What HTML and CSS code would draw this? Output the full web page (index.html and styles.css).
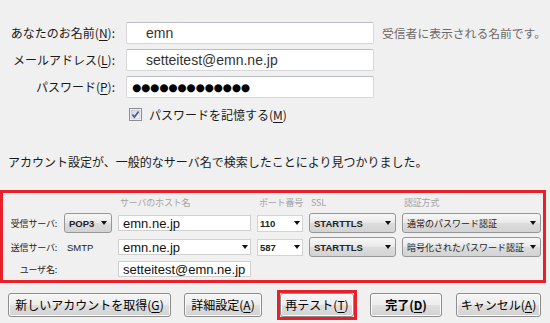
FILE: index.html
```html
<!DOCTYPE html>
<html>

<head>
  <meta charset="utf-8">
  <title>アカウント設定</title>
  <link rel="stylesheet" href="styles.css">
</head>

<body>
  <div class="identity">
    <label class="field-label">あなたのお名前(<u>N</u>):</label>
    <div class="text-box">emn</div>
    <span class="hint">受信者に表示される名前です。</span>

    <label class="field-label">メールアドレス(<u>L</u>):</label>
    <div class="text-box">setteitest@emn.ne.jp</div>
    <span></span>

    <label class="field-label">パスワード(<u>P</u>):</label>
    <div class="text-box password">●●●●●●●●●●●●●</div>
    <span></span>
  </div>

  <div class="remember">
    <svg class="check" width="13" height="13" viewBox="0 0 13 13">
      <defs>
        <linearGradient id="chk" x1="0" y1="0" x2="1" y2="1">
          <stop offset="0" stop-color="#cfd5e0" />
          <stop offset="1" stop-color="#f7f8fa" />
        </linearGradient>
      </defs>
      <rect x="0.5" y="0.5" width="12" height="12" fill="#fff" stroke="#8e8f8f" />
      <rect x="2" y="2" width="9" height="9" fill="url(#chk)" stroke="#b3bac8" stroke-width="0.6" />
      <path d="M3.4 6.4 L5.4 9 L9.6 3.4" fill="none" stroke="#4a5a8c" stroke-width="1.7" />
    </svg>
    <span>パスワードを記憶する(<u>M</u>)</span>
  </div>

  <p class="status">アカウント設定が、一般的なサーバ名で検索したことにより見つかりました。</p>

  <div class="server-box">
    <span></span>
    <span></span>
    <span class="col-head">サーバのホスト名</span>
    <span class="col-head">ポート番号</span>
    <span class="col-head">SSL</span>
    <span class="col-head">認証方式</span>

    <span class="row-label">受信サーバ:</span>
    <div class="select latin">POP3</div>
    <div class="host">emn.ne.jp</div>
    <div class="combo latin">110</div>
    <div class="select latin">STARTTLS</div>
    <div class="select">通常のパスワード認証</div>

    <span class="row-label">送信サーバ:</span>
    <span class="plain latin">SMTP</span>
    <div class="host combo-host">emn.ne.jp</div>
    <div class="combo latin">587</div>
    <div class="select latin">STARTTLS</div>
    <div class="select">暗号化されたパスワード認証</div>

    <span class="row-label">ユーザ名:</span>
    <span></span>
    <div class="host">setteitest@emn.ne.jp</div>
  </div>

  <div class="actions">
    <button type="button" class="btn new-account">新しいアカウントを取得(<u>G</u>)</button>
    <button type="button" class="btn advanced">詳細設定(<u>A</u>)</button>
    <div class="highlight">
      <button type="button" class="btn retest">再テスト(<u>T</u>)</button>
    </div>
    <button type="button" class="btn done">完了(<u>D</u>)</button>
    <button type="button" class="btn cancel">キャンセル(<u>A</u>)</button>
  </div>
</body>

</html>
```

FILE: styles.css
```css
body {
  margin: 0;
  background-color: #f0f0f0;
  font-family: "Noto Sans CJK JP", "Liberation Sans", sans-serif;
  font-size: 12px;
  color: #1a1a1a;
}

u {
  text-decoration: underline;
  text-underline-offset: 2px;
}

/* top fields */
.identity {
  display: grid;
  grid-template-columns: 117px 249px 1fr;
  grid-auto-rows: 22px;
  column-gap: 8px;
  row-gap: 5px;
  align-items: center;
  padding-top: 22px;
}

.identity > :nth-child(3n+2) {
  margin-left: 1px;
}

.field-label {
  text-align: right;
  padding-right: 2px;
  line-height: 22px;
  white-space: nowrap;
}

.text-box {
  box-sizing: border-box;
  height: 22px;
  background-color: #fff;
  border: 1px solid #d5d7db;
  border-top-color: #b9bcc2;
  border-radius: 2px;
  padding-left: 19px;
  font-family: "Liberation Sans", sans-serif;
  font-size: 14px;
  line-height: 20px;
  color: #333;
}

.password {
  padding-left: 5px;
  font-family: "DejaVu Sans", sans-serif;
  font-size: 10.5px;
  letter-spacing: -0.1px;
  color: #000;
  white-space: nowrap;
}

.hint {
  color: #6b6b6b;
  font-size: 11.8px;
  line-height: 22px;
  white-space: nowrap;
}

.remember {
  display: flex;
  align-items: center;
  gap: 7px;
  height: 13px;
  margin-top: 10px;
  padding-left: 129px;
  line-height: 13px;
}

.status {
  margin: 33px 0 0 8px;
  line-height: 16px;
}

/* server table */
.server-box {
  box-sizing: border-box;
  width: 546px;
  height: 93px;
  margin-top: 20px;
  border: 3px solid #e8202a;
  padding: 4px 0 0 7px;
  display: grid;
  grid-template-columns: 48px 48px 133px 46px 87px 139px;
  grid-template-rows: 12px 20px 20px 16px;
  column-gap: 6px;
  row-gap: 4px;
  align-items: center;
  font-size: 9px;
  white-space: nowrap;
}

.col-head {
  padding-left: 2px;
  color: #a3a3a3;
  line-height: 12px;
  letter-spacing: -0.2px;
}

.row-label {
  text-align: right;
  padding-right: 1px;
  font-size: 9px;
  letter-spacing: -0.2px;
  color: #1e1e1e;
}

.latin {
  font-family: "Liberation Sans", sans-serif;
  font-weight: bold;
  font-size: 9.5px;
  color: #222;
}

.plain {
  padding-left: 3px;
  font-weight: normal;
  font-size: 9.5px;
}

.select {
  box-sizing: border-box;
  height: 20px;
  display: flex;
  align-items: center;
  justify-content: space-between;
  padding-left: 4px;
  border: 1px solid #979797;
  border-radius: 3px;
  background: linear-gradient(#f7f7f7, #e9e9e9 50%, #dcdcdc 51%, #d3d3d3);
  overflow: hidden;
}

.select::after,
.combo::after,
.combo-host::after {
  content: "";
  flex: none;
  margin-right: 4px;
  border-left: 3px solid transparent;
  border-right: 3px solid transparent;
  border-top: 4px solid #111;
}

.combo {
  box-sizing: border-box;
  height: 17px;
  display: flex;
  align-items: center;
  justify-content: space-between;
  padding-left: 2px;
  background-color: #fff;
  border: 1px solid #d3d3d3;
}

.combo::after {
  margin-right: 2px;
}

.host {
  box-sizing: border-box;
  height: 16px;
  display: flex;
  align-items: center;
  justify-content: space-between;
  padding-left: 4px;
  background-color: #fff;
  border: 1px solid #d0d0d0;
  font-family: "Liberation Sans", sans-serif;
  font-size: 13px;
  color: #111;
}

.combo-host::after {
  margin-right: 2px;
}

/* buttons */
.actions {
  display: flex;
  align-items: center;
  height: 31px;
  margin-top: 6px;
  padding-left: 8px;
}

.btn {
  box-sizing: border-box;
  height: 24px;
  padding: 0;
  border: 1px solid #8c8c8c;
  border-radius: 3px;
  background: linear-gradient(#f6f6f6, #ececec 50%, #dfdfdf 51%, #d2d2d2);
  box-shadow: inset 0 0 0 1px #fbfbfb;
  font-family: "Noto Sans CJK JP", sans-serif;
  font-size: 12px;
  color: #000;
  cursor: pointer;
}

.new-account {
  width: 163px;
}

.advanced {
  width: 78px;
  margin-left: 13px;
}

.highlight {
  display: flex;
  margin-left: 15px;
  border: 3px solid #e8202a;
}

.retest {
  width: 74px;
}

.done {
  width: 72px;
  margin-left: 13px;
  font-weight: bold;
}

.cancel {
  width: 85px;
  margin-left: 14px;
}
```
